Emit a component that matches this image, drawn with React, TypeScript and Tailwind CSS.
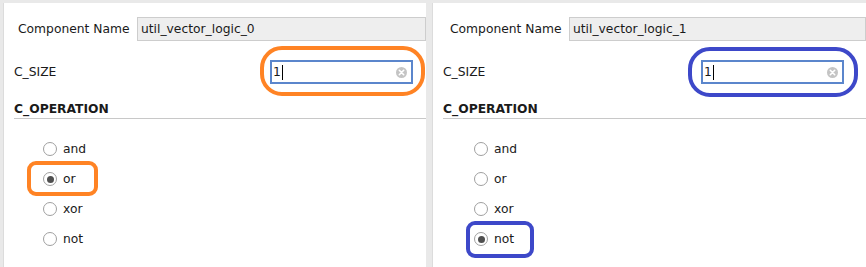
import React from "react";

type PanelProps = {
  name: string;
  selected: string;
  widthClass: string;
  sizeRight: string;
  nameLeft: string;
  radioIndent: string;
  accent: "orange" | "blue";
};

const OPS = ["and", "or", "xor", "not"];

function ClearIcon() {
  return (
    <svg width="11" height="11" viewBox="0 0 11 11" className="shrink-0">
      <circle cx="5.5" cy="5.5" r="5.5" fill="#c4c4c4" />
      <path d="M3.3 3.3 L7.7 7.7 M7.7 3.3 L3.3 7.7" stroke="#ffffff" strokeWidth="1.6" strokeLinecap="round" />
    </svg>
  );
}

function Radio({ checked }: { checked: boolean }) {
  return (
    <span className="w-[14px] h-[14px] rounded-full border border-[#a0a0a0] bg-white flex items-center justify-center shrink-0">
      {checked && <span className="w-[7px] h-[7px] rounded-full bg-[#4f4f4f]" />}
    </span>
  );
}

function Panel({ name, selected, widthClass, sizeRight, nameLeft, radioIndent, accent }: PanelProps) {
  const sel = OPS.indexOf(selected);
  return (
    <div className={`relative h-full bg-white border-l border-[#dcdcdc] shrink-0 pt-[14px] ${widthClass}`}>
      {/* Component name */}
      <div className={`flex items-center ${nameLeft}`}>
        <span className="w-[119px] shrink-0">Component Name</span>
        <div className="flex-1 h-[24px] bg-[#eeeeee] border border-[#cdcdcd] flex items-center pl-[3px]">
          {name}
        </div>
      </div>

      {/* C_SIZE */}
      <div className={`flex items-center justify-between mt-[19px] pl-[10px] ${sizeRight}`}>
        <span>C_SIZE</span>
        <div className="w-[143px] h-[24px] border-2 border-[#5b86cc] flex items-center pl-[1px] pr-[4px]">
          <span>1</span>
          <span className="w-px h-[15px] bg-black ml-[1px]" />
          <span className="flex-1" />
          <ClearIcon />
        </div>
      </div>

      {/* C_OPERATION */}
      <div className="mt-[17px] ml-[10px] border-b border-[#c8c8c8] pb-[1px] font-bold leading-[16px]">
        C_OPERATION
      </div>

      <div className={`mt-[15px] flex flex-col ${radioIndent}`}>
        {OPS.map((op) => (
          <div key={op} className="h-[30px] flex items-center gap-[6px]">
            <Radio checked={op === selected} />
            <span>{op}</span>
          </div>
        ))}
      </div>

      {/* annotations */}
      {accent === "orange" ? (
        <>
          <div className="absolute left-[256px] top-[43px] w-[165px] h-[50px] border-4 border-[#ff8324] rounded-[22px]" />
          <div
            className="absolute left-[23px] w-[71px] h-[35px] border-4 border-[#ff8324] rounded-[9px]"
            style={{ top: 131 + sel * 30 - 3 }}
          />
        </>
      ) : (
        <>
          <div className="absolute left-[255px] top-[44px] w-[170px] h-[50px] border-4 border-[#3d48c9] rounded-[22px]" />
          <div
            className="absolute left-[33px] w-[68px] h-[37px] border-4 border-[#3d48c9] rounded-[9px]"
            style={{ top: 131 + sel * 30 - 3 }}
          />
        </>
      )}
    </div>
  );
}

export default function App() {
  return (
    <div
      className="w-[866px] h-[267px] overflow-hidden bg-[#e9e9e9] flex pt-[3px] text-[12.3px] text-[#1a1a1a]"
      style={{ fontFamily: '"DejaVu Sans", sans-serif' }}
    >
      <div className="ml-[3px] h-full">
        <Panel
          name="util_vector_logic_0"
          selected="or"
          widthClass="w-[423px]"
          sizeRight="pr-[13px]"
          nameLeft="pl-[14px]"
          radioIndent="pl-[39px]"
          accent="orange"
        />
      </div>
      <div className="ml-[6px] h-full">
        <Panel
          name="util_vector_logic_1"
          selected="not"
          widthClass="w-[434px]"
          sizeRight="pr-[22px]"
          nameLeft="pl-[17px]"
          radioIndent="pl-[41px]"
          accent="blue"
        />
      </div>
    </div>
  );
}
